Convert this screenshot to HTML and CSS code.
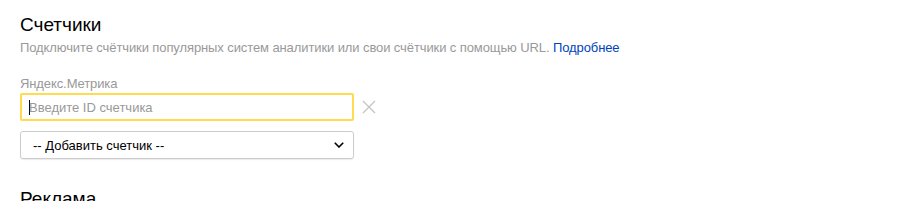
FILE: index.html
```html
<!DOCTYPE html>
<html lang="ru">
<head>
<meta charset="utf-8">
<link rel="stylesheet" href="styles.css">
</head>
<body>
<div class="page">
  <section class="section">
    <h2 class="title">Счетчики</h2>
    <p class="desc">Подключите счётчики популярных систем аналитики или свои счётчики с помощью URL. <a class="more" href="#">Подробнее</a></p>
    <div class="field">
      <div class="label">Яндекс.Метрика</div>
      <div class="row">
        <div class="input"><span class="caret"></span><span class="ph">Введите ID счетчика</span></div>
        <svg class="clear" width="14" height="14" viewBox="0 0 14 14"><path d="M1 1L13 13M13 1L1 13" stroke="#c4c4c4" stroke-width="1.3" fill="none"/></svg>
      </div>
      <div class="select">
        <span>-- Добавить счетчик --</span>
        <svg class="chev" width="10" height="6" viewBox="0 0 10 6"><path d="M0.8 0.8L5 5L9.2 0.8" stroke="#000" stroke-width="1.6" fill="none"/></svg>
      </div>
    </div>
  </section>
  <section class="section">
    <h2 class="title next">Реклама</h2>
  </section>
</div>
</body>
</html>
```
FILE: styles.css
```css
html, body {
  margin: 0;
  padding: 0;
  background: #fff;
}
body {
  font-family: Arial, "Liberation Sans", sans-serif;
  color: #000;
}
.page {
  padding: 14px 20px 0 20px;
}
.title {
  margin: 0;
  font-size: 19px;
  font-weight: normal;
  line-height: 22px;
  color: #000;
}
.title.next {
  margin-top: 29px;
}
.desc {
  margin: 4px 0 0 0;
  font-size: 13px;
  letter-spacing: -0.1px;
  line-height: 16px;
  color: #999;
}
.more {
  color: #04b;
  text-decoration: none;
}
.field {
  margin-top: 20px;
}
.label {
  font-size: 13px;
  letter-spacing: -0.1px;
  line-height: 16px;
  color: #999;
}
.row {
  display: flex;
  align-items: center;
  gap: 8px;
  margin-top: 1px;
}
.input {
  box-sizing: border-box;
  width: 334px;
  height: 28px;
  border: 2px solid #ffdb4d;
  border-radius: 2px;
  display: flex;
  align-items: center;
  padding-left: 7px;
  font-size: 13px;
  color: #999;
}
.caret {
  width: 1px;
  height: 15px;
  background: #000;
  margin-right: -1px;
}
.clear {
  display: block;
}
.select {
  box-sizing: border-box;
  width: 334px;
  height: 28px;
  margin-top: 10px;
  border: 1px solid #ccc;
  border-radius: 3px;
  box-shadow: 0 1px 1px rgba(0,0,0,0.08);
  display: flex;
  align-items: center;
  justify-content: space-between;
  padding: 0 9px 0 12px;
  font-size: 13px;
  color: #000;
}
.chev {
  display: block;
}
```
